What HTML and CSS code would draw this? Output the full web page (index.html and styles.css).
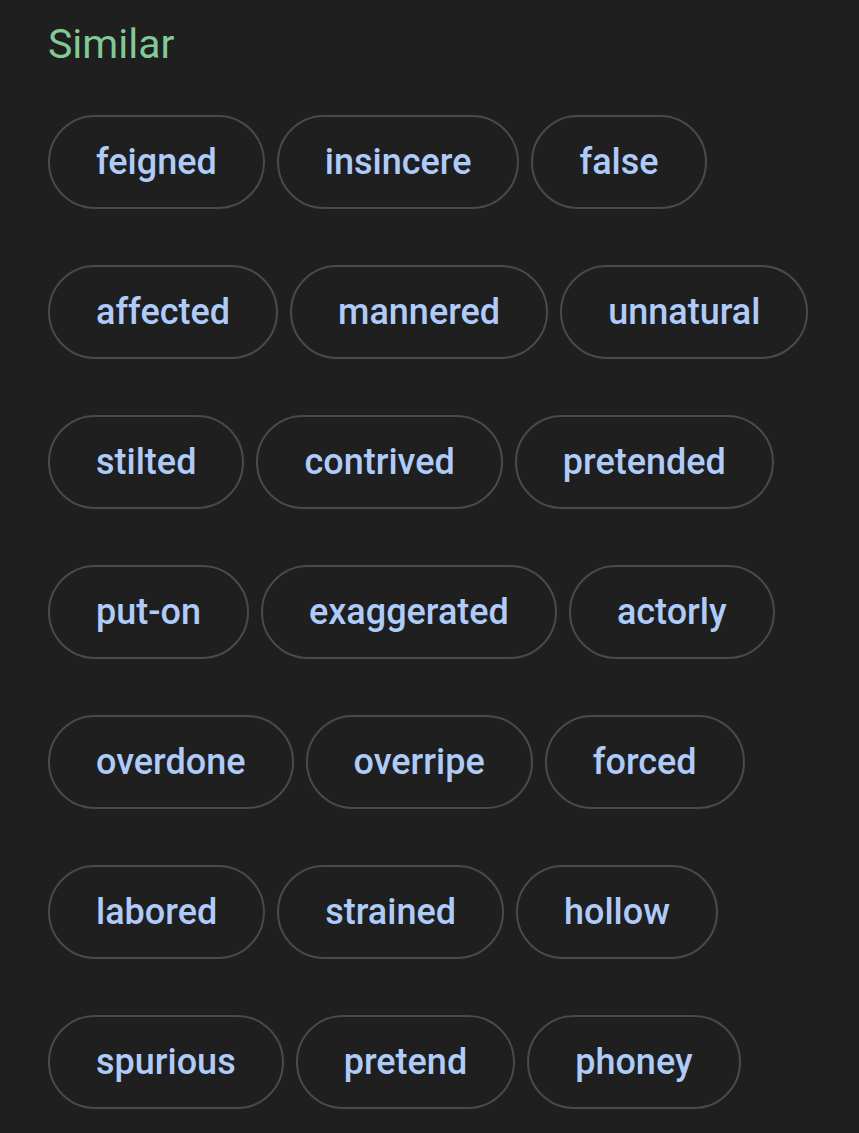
FILE: index.html
```html
<!DOCTYPE html>
<html>
<head>
<meta charset="utf-8">
<link rel="stylesheet" href="styles.css">
</head>
<body>
<section class="similar">
  <h2 class="title">Similar</h2>
  <div class="rows">
    <div class="row"><span class="chip">feigned</span><span class="chip">insincere</span><span class="chip">false</span></div>
    <div class="row"><span class="chip">affected</span><span class="chip">mannered</span><span class="chip">unnatural</span></div>
    <div class="row"><span class="chip">stilted</span><span class="chip">contrived</span><span class="chip">pretended</span></div>
    <div class="row"><span class="chip">put-on</span><span class="chip">exaggerated</span><span class="chip">actorly</span></div>
    <div class="row"><span class="chip">overdone</span><span class="chip">overripe</span><span class="chip">forced</span></div>
    <div class="row"><span class="chip">labored</span><span class="chip">strained</span><span class="chip">hollow</span></div>
    <div class="row"><span class="chip">spurious</span><span class="chip">pretend</span><span class="chip">phoney</span></div>
  </div>
</section>
</body>
</html>
```
FILE: styles.css
```css
html, body {
  margin: 0;
  padding: 0;
  background: #1f1f1f;
}
body {
  font-family: Roboto, "Liberation Sans", sans-serif;
  width: 859px;
  height: 1133px;
  overflow: hidden;
}
.similar {
  padding: 18px 0 0 48px;
}
.title {
  margin: 0;
  font-size: 41px;
  font-weight: 400;
  line-height: 52px;
  color: #81c995;
}
.rows {
  margin-top: 45px;
  display: flex;
  flex-direction: column;
  gap: 56px;
}
.row {
  display: flex;
  gap: 12px;
}
.chip {
  box-sizing: border-box;
  height: 94px;
  padding: 0 46px;
  border: 2.5px solid #4a4a4a;
  border-radius: 47px;
  display: inline-flex;
  align-items: center;
  font-size: 36px;
  font-weight: 500;
  color: #aecbfa;
}
```
